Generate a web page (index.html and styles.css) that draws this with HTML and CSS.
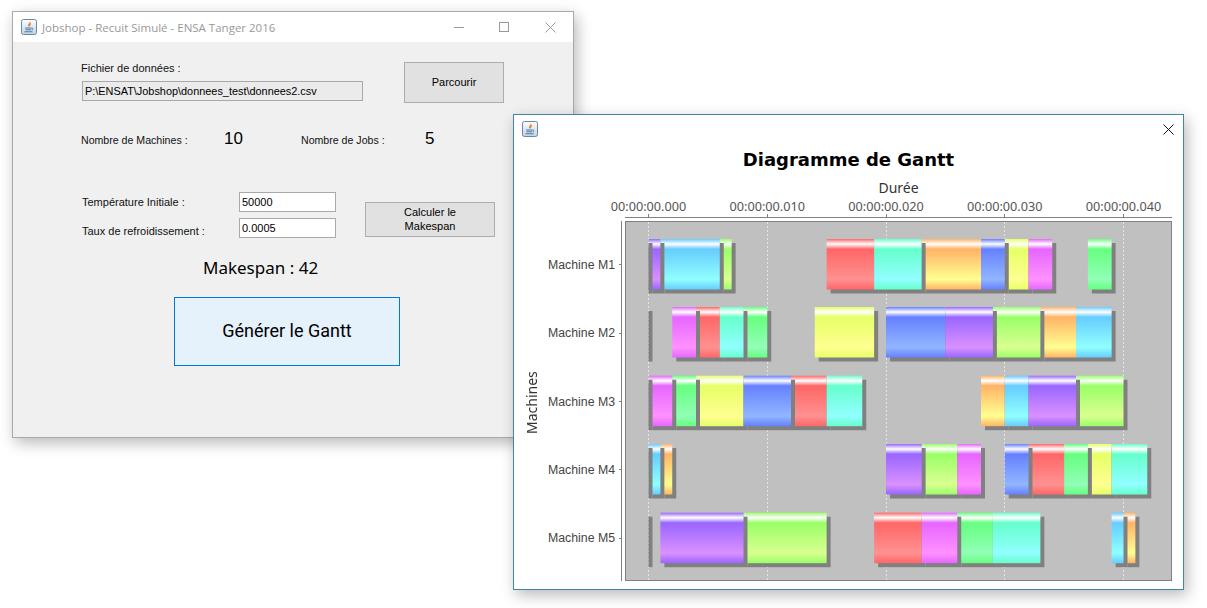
FILE: index.html
```html
<!DOCTYPE html>
<html lang="fr">
<head>
    <meta charset="UTF-8">
    <title>Jobshop - Recuit Simulé</title>
    <link rel="stylesheet" href="styles.css">
</head>
<body>
    <!-- Shared java cup icon and bar gradients -->
    <svg class="defs" width="0" height="0">
        <defs>
            <linearGradient id="icon-bg" x1="0" y1="0" x2="0" y2="1">
                <stop offset="0" stop-color="#fdfdfe"/>
                <stop offset="1" stop-color="#c3d3e2"/>
            </linearGradient>
            <symbol id="java-icon" viewBox="0 0 16 16">
                <rect x="0.5" y="0.5" width="15" height="15" rx="2" fill="url(#icon-bg)" stroke="#6c87a0"/>
                <path d="M8.6 2.5c.6 1.6-2.2 2.6-1.4 4.6.2.5.5.8.9 1-.3-1.2 2.6-2.2 1.5-4.2-.2-.5-.6-1-1-1.400z" fill="#e8782a"/>
                <path d="M4 9h6.500M4.500 10.800h5.500M3.500 12.800h8" stroke="#4a7ba6" stroke-width="1.100" fill="none"/>
                <path d="M10.500 9.200c1.800-.4 2 1.300.2 1.800" stroke="#4a7ba6" fill="none"/>
            </symbol>
            <linearGradient id="red" x1="0" y1="0" x2="0" y2="1"><stop offset="0" stop-color="#ff6666"/><stop offset=".1" stop-color="#fff"/><stop offset=".2" stop-color="#ff6666"/><stop offset=".8" stop-color="#ff9191"/><stop offset="1" stop-color="#ff6666"/></linearGradient>
            <linearGradient id="orange" x1="0" y1="0" x2="0" y2="1"><stop offset="0" stop-color="#ffb366"/><stop offset=".1" stop-color="#fff"/><stop offset=".2" stop-color="#ffb366"/><stop offset=".8" stop-color="#ffff91"/><stop offset="1" stop-color="#ffb366"/></linearGradient>
            <linearGradient id="yellow" x1="0" y1="0" x2="0" y2="1"><stop offset="0" stop-color="#e6ff66"/><stop offset=".1" stop-color="#fff"/><stop offset=".2" stop-color="#e6ff66"/><stop offset=".8" stop-color="#ffff91"/><stop offset="1" stop-color="#e6ff66"/></linearGradient>
            <linearGradient id="lime" x1="0" y1="0" x2="0" y2="1"><stop offset="0" stop-color="#99ff66"/><stop offset=".1" stop-color="#fff"/><stop offset=".2" stop-color="#99ff66"/><stop offset=".8" stop-color="#daff91"/><stop offset="1" stop-color="#99ff66"/></linearGradient>
            <linearGradient id="green" x1="0" y1="0" x2="0" y2="1"><stop offset="0" stop-color="#66ff80"/><stop offset=".1" stop-color="#fff"/><stop offset=".2" stop-color="#66ff80"/><stop offset=".8" stop-color="#91ffb6"/><stop offset="1" stop-color="#66ff80"/></linearGradient>
            <linearGradient id="cyan" x1="0" y1="0" x2="0" y2="1"><stop offset="0" stop-color="#66ffcc"/><stop offset=".1" stop-color="#fff"/><stop offset=".2" stop-color="#66ffcc"/><stop offset=".8" stop-color="#91ffff"/><stop offset="1" stop-color="#66ffcc"/></linearGradient>
            <linearGradient id="sky" x1="0" y1="0" x2="0" y2="1"><stop offset="0" stop-color="#66ccff"/><stop offset=".1" stop-color="#fff"/><stop offset=".2" stop-color="#66ccff"/><stop offset=".8" stop-color="#91ffff"/><stop offset="1" stop-color="#66ccff"/></linearGradient>
            <linearGradient id="blue" x1="0" y1="0" x2="0" y2="1"><stop offset="0" stop-color="#6680ff"/><stop offset=".1" stop-color="#fff"/><stop offset=".2" stop-color="#6680ff"/><stop offset=".8" stop-color="#91b6ff"/><stop offset="1" stop-color="#6680ff"/></linearGradient>
            <linearGradient id="purple" x1="0" y1="0" x2="0" y2="1"><stop offset="0" stop-color="#9966ff"/><stop offset=".1" stop-color="#fff"/><stop offset=".2" stop-color="#9966ff"/><stop offset=".8" stop-color="#da91ff"/><stop offset="1" stop-color="#9966ff"/></linearGradient>
            <linearGradient id="magenta" x1="0" y1="0" x2="0" y2="1"><stop offset="0" stop-color="#e666ff"/><stop offset=".1" stop-color="#fff"/><stop offset=".2" stop-color="#e666ff"/><stop offset=".8" stop-color="#ff91ff"/><stop offset="1" stop-color="#e666ff"/></linearGradient>
        </defs>
    </svg>

    <div class="window main-window">
        <div class="titlebar">
            <svg class="app-icon"><use href="#java-icon"/></svg>
            <span class="window-title">Jobshop - Recuit Simulé - ENSA Tanger 2016</span>
            <span class="win-btn min-btn">
                <svg width="10" height="10" viewBox="0 0 10 10"><path d="M0 5.500h10" stroke="#999"/></svg>
            </span>
            <span class="win-btn">
                <svg width="10" height="10" viewBox="0 0 10 10"><rect x=".5" y=".5" width="9" height="9" fill="none" stroke="#999"/></svg>
            </span>
            <span class="win-btn">
                <svg width="11" height="11" viewBox="0 0 11 11"><path d="M.5.500l10 10M10.500.500l-10 10" stroke="#999"/></svg>
            </span>
        </div>
        <div class="form">
            <div class="file-row">
                <div class="file-col">
                    <div class="label">Fichier de données :</div>
                    <div class="field file-field">P:\ENSAT\Jobshop\donnees_test\donnees2.csv</div>
                </div>
                <button class="btn browse-btn">Parcourir</button>
            </div>
            <div class="stats-row">
                <span class="label stat-machines">Nombre de Machines :</span>
                <span class="stat-value stat-machines-value">10</span>
                <span class="label stat-jobs">Nombre de Jobs :</span>
                <span class="stat-value">5</span>
            </div>
            <div class="params-row">
                <div class="params-grid">
                    <span class="label">Température Initiale :</span>
                    <div class="field">50000</div>
                    <span class="label label-low">Taux de refroidissement :</span>
                    <div class="field">0.0005</div>
                </div>
                <button class="btn compute-btn">Calculer le<br>Makespan</button>
            </div>
            <div class="makespan">Makespan : 42</div>
            <button class="generate-btn">Générer le Gantt</button>
        </div>
    </div>

    <div class="window gantt-window">
        <div class="titlebar gantt-titlebar">
            <svg class="app-icon"><use href="#java-icon"/></svg>
            <span class="close-btn">
                <svg width="11" height="11" viewBox="0 0 11 11"><path d="M.5.500l10 10M10.500.500l-10 10" stroke="#111"/></svg>
            </span>
        </div>
        <div class="chart-title">Diagramme de Gantt</div>
        <div class="chart">
            <div></div>
            <div class="x-head">
                <div class="x-title">Durée</div>
                <div class="x-ticks">
                    <span>00:00:00.000</span>
                    <span>00:00:00.010</span>
                    <span>00:00:00.020</span>
                    <span>00:00:00.030</span>
                    <span>00:00:00.040</span>
                </div>
                <svg class="x-axis" width="547" height="7">
                    <path d="M0 3.500h547" stroke="#808080"/>
                    <path d="M23.500 0v3M142.500 0v3M261.500 0v3M379.500 0v3M498.500 0v3" stroke="#808080"/>
                </svg>
            </div>
            <div class="y-head">
                <div class="y-title">Machines</div>
                <div class="y-labels">
                    <div class="y-label">Machine M1</div>
                    <div class="y-label">Machine M2</div>
                    <div class="y-label">Machine M3</div>
                    <div class="y-label">Machine M4</div>
                    <div class="y-label">Machine M5</div>
                </div>
            </div>
            <svg class="plot" width="547" height="360">
                <rect x=".5" y=".5" width="546" height="359" fill="#c0c0c0" stroke="#808080"/>
                <path class="gridline" d="M23.500 1v358M142.500 1v358M261.500 1v358M379.500 1v358M498.500 1v358"/>
                <g transform="translate(0 18)">
                    <rect class="bar" x="296.625" width="59.375" fill="url(#orange)"/>
                    <rect class="bar" x="94.75" width="11.875" fill="url(#lime)"/>
                    <rect class="bar" x="201.625" width="47.5" fill="url(#red)"/>
                    <rect class="bar" x="379.75" width="23.75" fill="url(#yellow)"/>
                    <rect class="bar" x="462.875" width="23.75" fill="url(#green)"/>
                    <rect class="bar" x="35.375" width="59.375" fill="url(#sky)"/>
                    <rect class="bar" x="249.125" width="47.5" fill="url(#cyan)"/>
                    <rect class="bar" x="356" width="23.75" fill="url(#blue)"/>
                    <rect class="bar" x="23.5" width="11.875" fill="url(#purple)"/>
                    <rect class="bar" x="403.5" width="23.75" fill="url(#magenta)"/>
                    <rect class="stub" x="23.5" y="4" width="4"/>
                </g>
                <g transform="translate(0 86)">
                    <rect class="bar" x="415.375" width="35.625" fill="url(#orange)"/>
                    <rect class="bar" x="367.875" width="47.5" fill="url(#lime)"/>
                    <rect class="bar" x="71" width="23.75" fill="url(#red)"/>
                    <rect class="bar" x="189.75" width="59.375" fill="url(#yellow)"/>
                    <rect class="bar" x="118.5" width="23.75" fill="url(#green)"/>
                    <rect class="bar" x="451" width="35.625" fill="url(#sky)"/>
                    <rect class="bar" x="94.75" width="23.75" fill="url(#cyan)"/>
                    <rect class="bar" x="261" width="59.375" fill="url(#blue)"/>
                    <rect class="bar" x="320.375" width="47.5" fill="url(#purple)"/>
                    <rect class="bar" x="47.25" width="23.75" fill="url(#magenta)"/>
                    <rect class="stub" x="23.5" y="4" width="4"/>
                </g>
                <g transform="translate(0 154.7)">
                    <rect class="bar" x="356" width="23.75" fill="url(#orange)"/>
                    <rect class="bar" x="451" width="47.5" fill="url(#lime)"/>
                    <rect class="bar" x="166" width="35.625" fill="url(#red)"/>
                    <rect class="bar" x="71" width="47.5" fill="url(#yellow)"/>
                    <rect class="bar" x="47.25" width="23.75" fill="url(#green)"/>
                    <rect class="bar" x="379.75" width="23.75" fill="url(#sky)"/>
                    <rect class="bar" x="201.625" width="35.625" fill="url(#cyan)"/>
                    <rect class="bar" x="118.5" width="47.5" fill="url(#blue)"/>
                    <rect class="bar" x="403.5" width="47.5" fill="url(#purple)"/>
                    <rect class="bar" x="23.5" width="23.75" fill="url(#magenta)"/>
                    <rect class="stub" x="23.5" y="4" width="4"/>
                </g>
                <g transform="translate(0 223)">
                    <rect class="bar" x="35.375" width="11.875" fill="url(#orange)"/>
                    <rect class="bar" x="296.625" width="35.625" fill="url(#lime)"/>
                    <rect class="bar" x="403.5" width="35.625" fill="url(#red)"/>
                    <rect class="bar" x="462.875" width="23.75" fill="url(#yellow)"/>
                    <rect class="bar" x="439.125" width="23.75" fill="url(#green)"/>
                    <rect class="bar" x="23.5" width="11.875" fill="url(#sky)"/>
                    <rect class="bar" x="486.625" width="35.625" fill="url(#cyan)"/>
                    <rect class="bar" x="379.75" width="23.75" fill="url(#blue)"/>
                    <rect class="bar" x="261" width="35.625" fill="url(#purple)"/>
                    <rect class="bar" x="332.25" width="23.75" fill="url(#magenta)"/>
                    <rect class="stub" x="23.5" y="4" width="4"/>
                </g>
                <g transform="translate(0 291.7)">
                    <rect class="bar" x="498.5" width="11.875" fill="url(#orange)"/>
                    <rect class="bar" x="118.5" width="83.125" fill="url(#lime)"/>
                    <rect class="bar" x="249.125" width="47.5" fill="url(#red)"/>
                    <rect class="bar" x="332.25" width="35.625" fill="url(#green)"/>
                    <rect class="bar" x="486.625" width="11.875" fill="url(#sky)"/>
                    <rect class="bar" x="367.875" width="47.5" fill="url(#cyan)"/>
                    <rect class="bar" x="35.375" width="83.125" fill="url(#purple)"/>
                    <rect class="bar" x="296.625" width="35.625" fill="url(#magenta)"/>
                    <rect class="stub" x="23.5" y="4" width="4"/>
                </g>
            </svg>
        </div>
    </div>
</body>
</html>
```

FILE: styles.css
```css
body {
    margin: 0;
    overflow: hidden;
    background-color: #fff;
    font-family: 'Liberation Sans', sans-serif;
    color: #000;
}
.defs {
    position: absolute;
}

/* Desktop windows */
.window {
    position: absolute;
    box-sizing: border-box;
    box-shadow: 3px 5px 14px rgba(0, 0, 0, 0.28);
}
.main-window {
    left: 12px;
    top: 11px;
    width: 562px;
    height: 427px;
    border: 1px solid #a9a9a9;
    background-color: #f0f0f0;
}
.gantt-window {
    left: 513px;
    top: 114px;
    width: 671px;
    height: 476px;
    border: 1px solid #3f87a4;
    background-color: #fff;
}
.titlebar {
    display: flex;
    align-items: center;
    height: 30px;
    padding-left: 8px;
    background-color: #fff;
}
.app-icon {
    width: 16px;
    height: 16px;
    flex: none;
}
.window-title {
    flex: 1;
    margin-left: 5px;
    font-family: 'Open Sans', sans-serif;
    font-size: 11.5px;
    color: #999;
}
.win-btn {
    display: flex;
    justify-content: center;
    align-items: center;
    width: 46px;
    height: 30px;
}
.min-btn {
    width: 44px;
}

/* Main form */
.form {
    padding: 20px 0 0 68px;
}
.label {
    font-size: 11px;
    line-height: 14px;
    color: #111;
}
.label-low {
    padding-top: 6px;
}
.field {
    box-sizing: border-box;
    height: 20px;
    border: 1px solid #a9a9a9;
    background-color: #fff;
    padding-left: 2px;
    font-size: 11px;
    line-height: 18px;
}
.btn {
    border: 1px solid #adadad;
    background-color: #e1e1e1;
    padding: 0 0 2px;
    font-family: 'Liberation Sans', sans-serif;
    font-size: 11px;
    line-height: 14px;
    color: #000;
}
.file-row {
    display: flex;
}
.file-col {
    width: 323px;
    margin-top: -1px;
}
.file-field {
    width: 281px;
    margin: 6px 0 0 1px;
    background-color: #ebebeb;
    font-size: 10.9px;
}
.browse-btn {
    width: 100px;
    height: 41px;
}
.stats-row {
    display: flex;
    align-items: center;
    height: 20px;
    margin-top: 26px;
}
.stats-row .label {
    padding-top: 2px;
    font-size: 10.6px;
}
.stat-machines {
    width: 143px;
}
.stat-machines-value {
    width: 77px;
}
.stat-jobs {
    width: 124px;
}
.stat-value {
    font-size: 17px;
    line-height: 20px;
}
.params-row {
    display: flex;
    align-items: flex-start;
    margin-top: 43px;
    padding-left: 1px;
}
.params-grid {
    display: grid;
    grid-template-columns: 157px 97px;
    grid-auto-rows: 20px;
    row-gap: 6px;
    align-items: center;
}
.compute-btn {
    width: 130px;
    height: 35px;
    margin: 10px 0 0 29px;
}
.makespan {
    margin: 19px 0 0 122px;
    font-family: 'Noto Sans', sans-serif;
    font-size: 17px;
    line-height: 22px;
}
.generate-btn {
    display: block;
    box-sizing: border-box;
    width: 226px;
    height: 69px;
    margin: 18px 0 0 93px;
    padding: 0 0 2px;
    border: 1px solid #0078d7;
    background-color: #e5f1fb;
    font-family: 'Roboto', sans-serif;
    font-size: 18px;
    color: #000;
}

/* Gantt window */
.gantt-titlebar {
    justify-content: space-between;
    height: 28px;
}
.close-btn {
    display: flex;
    justify-content: center;
    align-items: center;
    width: 30px;
    height: 28px;
}
.chart-title {
    margin-top: 5px;
    height: 24px;
    line-height: 24px;
    text-align: center;
    font-family: 'DejaVu Sans', sans-serif;
    font-weight: bold;
    font-size: 18px;
}
.chart {
    display: grid;
    grid-template-columns: 111px 547px;
    margin-top: 8px;
    font-family: 'Noto Sans', sans-serif;
}
.x-title {
    height: 18px;
    line-height: 16px;
    text-align: center;
    font-size: 14px;
    color: #333;
}
.x-ticks {
    display: flex;
    margin-left: -35.875px;
    height: 16px;
}
.x-ticks span {
    flex: none;
    width: 118.75px;
    text-align: center;
    font-size: 12.7px;
    line-height: 16px;
    color: #555;
}
.x-axis {
    display: block;
}
.y-head {
    display: flex;
    height: 360px;
}
.y-title {
    box-sizing: border-box;
    width: 27px;
    margin-left: 10px;
    padding: 0 0 3px 11px;
    writing-mode: vertical-rl;
    transform: rotate(180deg);
    text-align: center;
    font-size: 14px;
    line-height: 16px;
    color: #333;
}
.y-labels {
    box-sizing: border-box;
    width: 71px;
    padding-top: 9.8px;
    border-right: 1px solid #808080;
}
.y-label {
    position: relative;
    display: flex;
    justify-content: flex-end;
    height: 68.4px;
    line-height: 68.4px;
    padding-right: 6px;
    white-space: nowrap;
    font-family: 'Liberation Sans', sans-serif;
    font-size: 12.3px;
    color: #444;
}
.y-label::after {
    content: "";
    position: absolute;
    right: 0;
    top: 33.5px;
    width: 2px;
    height: 1px;
    background-color: #808080;
}
.plot {
    display: block;
}
.gridline {
    stroke: #e4e4e4;
    stroke-dasharray: 2 2;
}
.bar {
    height: 50.5px;
    filter: drop-shadow(4px 4px 0 #808080);
}
.stub {
    height: 50.5px;
    fill: #808080;
}
```
